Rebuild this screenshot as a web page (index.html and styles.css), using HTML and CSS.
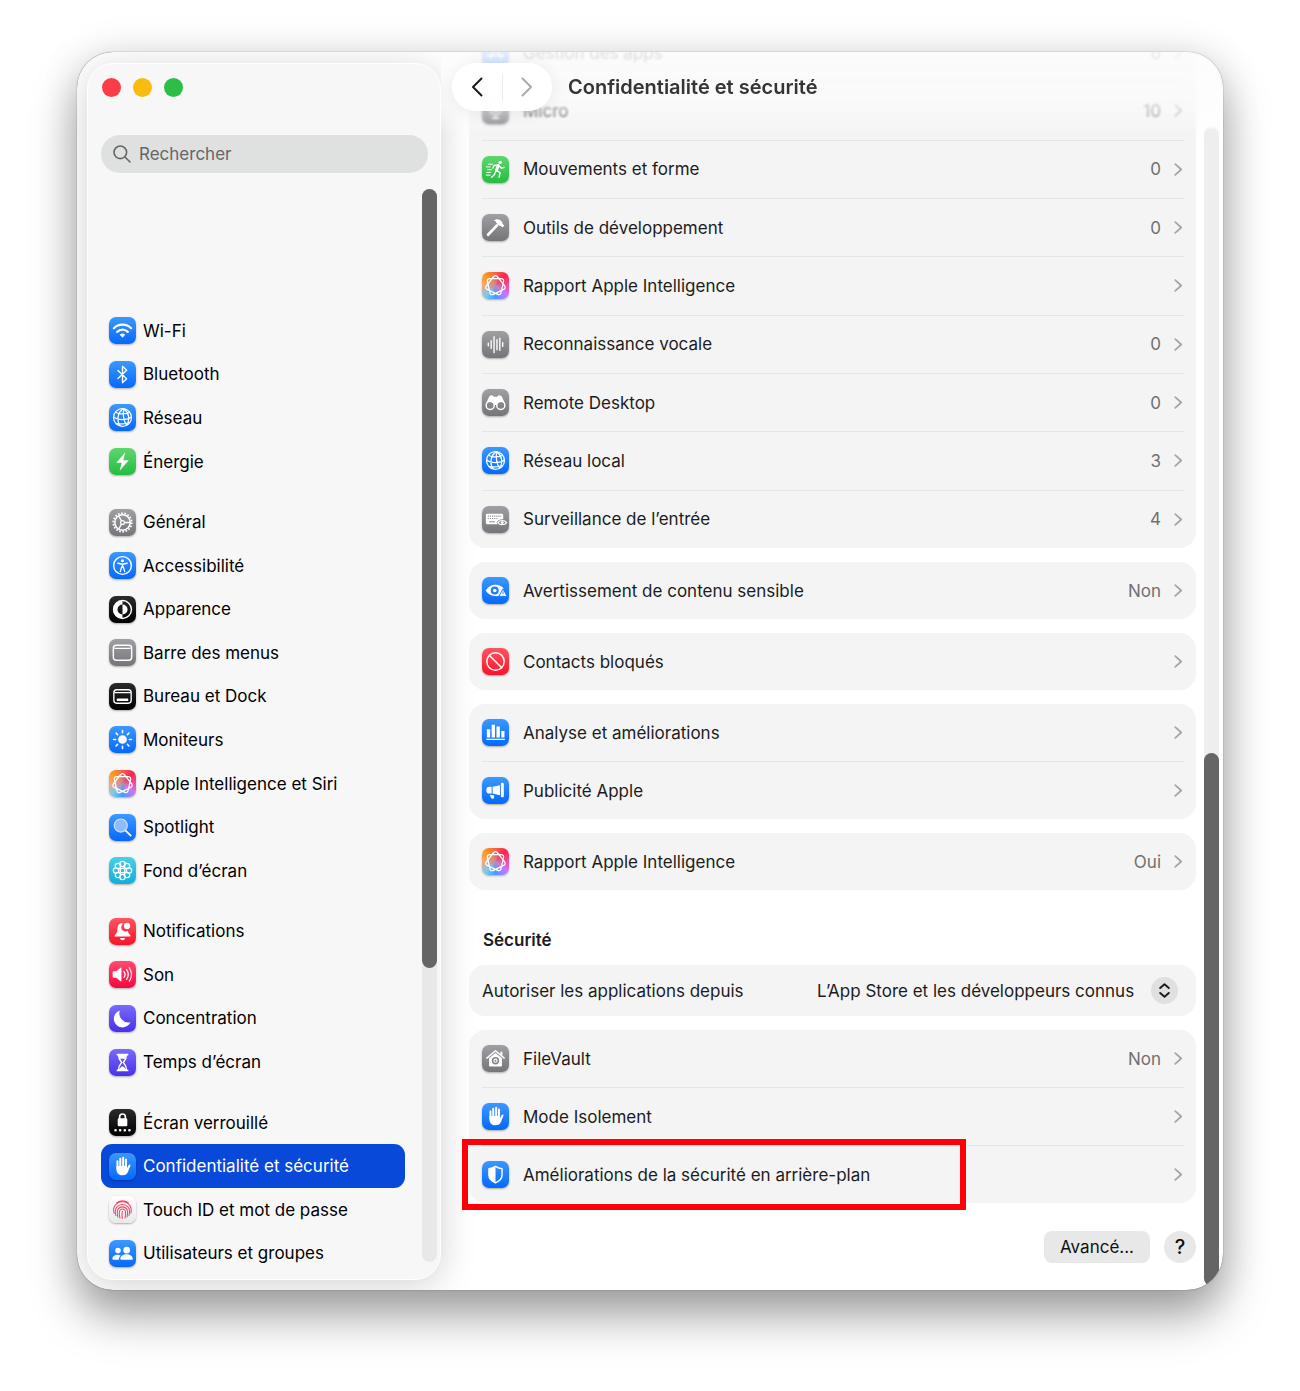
FILE: index.html
```html
<!DOCTYPE html>
<html lang="fr">
  <head>
    <meta charset="UTF-8">
    <meta name="viewport" content="width=device-width, initial-scale=1.0">
    <title>Confidentialité et sécurité</title>
    <link rel="stylesheet" href="styles.css">
  </head>
  <body>
    <!-- Icon glyphs, all on a 28 x 28 grid -->
    <svg class="glyphs" xmlns="http://www.w3.org/2000/svg">
      <symbol id="wifi" viewBox="0 0 28 28">
        <path d="M5 11.6a12.6 12.6 0 0 1 18 0M8.5 15.4a7.8 7.8 0 0 1 11 0" fill="none" stroke="currentColor" stroke-width="2.3" stroke-linecap="round" />
        <path d="M14 21.4l-2.8-3a4 4 0 0 1 5.6 0z" fill="currentColor" />
      </symbol>
      <symbol id="bluetooth" viewBox="0 0 28 28">
        <path d="M9.3 9.8l9 8.6-4.3 4.1v-17l4.3 4.1-9 8.6" fill="none" stroke="currentColor" stroke-width="1.4" stroke-linejoin="round" stroke-linecap="round" />
      </symbol>
      <symbol id="globe" viewBox="0 0 28 28">
        <g fill="none" stroke="currentColor" stroke-width="1.3">
          <circle cx="14" cy="14" r="9.3" />
          <path d="M15.5 4.8C8.500 8 7.500 18 12 23M15.500 4.800C14 10 15 18 18.500 22M15.500 4.800C21 9 21.500 16 19 21.500M6.500 8.500C11 11 18 10.500 21.500 8.500M4.800 13.500C9 17 19 17 23 13.500M7 20C11 21 18 20.800 21.500 19" />
        </g>
      </symbol>
      <symbol id="bolt" viewBox="0 0 28 28">
        <path d="M17 4.500L7.600 15.400h5.600L11 23.700l9.500-11h-5.700z" fill="currentColor" />
      </symbol>
      <symbol id="gear" viewBox="0 0 28 28">
        <g fill="none" stroke="currentColor">
          <circle cx="14" cy="14" r="8" stroke-width="1.600" />
          <circle cx="14" cy="14" r="9.600" stroke-width="1.800" stroke-dasharray="1.700 1.650" />
          <circle cx="14" cy="14" r="2" stroke-width="1.300" />
          <path d="M16 14h6M13 12.300l-3-5.200M13 15.700l-3 5.200" stroke-width="1.300" />
        </g>
      </symbol>
      <symbol id="access" viewBox="0 0 28 28">
        <circle cx="14" cy="14" r="9.200" fill="none" stroke="currentColor" stroke-width="1.500" />
        <circle cx="14" cy="9" r="1.600" fill="currentColor" />
        <path d="M9.200 11.700l4.800 1 4.800-1M14 12.500v3.500M11.700 20.300l1.500-5h1.600l1.500 5" fill="none" stroke="currentColor" stroke-width="1.400" stroke-linecap="round" stroke-linejoin="round" />
      </symbol>
      <symbol id="contrast" viewBox="0 0 28 28">
        <circle cx="14" cy="14" r="9.300" fill="none" stroke="currentColor" stroke-width="1.500" />
        <path d="M14 4.500a9.500 9.500 0 0 0 0 19v-4.300a5.200 5.200 0 0 1 0-10.400z" fill="currentColor" />
        <path d="M14 8.800a5.200 5.200 0 0 1 0 10.400z" fill="currentColor" />
      </symbol>
      <symbol id="menubar" viewBox="0 0 28 28">
        <rect x="4.500" y="6.500" width="19" height="15.500" rx="3" fill="none" stroke="currentColor" stroke-width="1.500" />
        <path d="M5.500 9.700h17" stroke="currentColor" stroke-width="1.200" />
      </symbol>
      <symbol id="dock" viewBox="0 0 28 28">
        <rect x="5" y="7" width="18" height="14" rx="3" fill="none" stroke="currentColor" stroke-width="1.400" />
        <path d="M5.500 10h17" stroke="currentColor" stroke-width="1.200" />
        <rect x="8" y="16" width="12" height="2.600" rx="0.600" fill="currentColor" />
      </symbol>
      <symbol id="sun" viewBox="0 0 28 28">
        <circle cx="14" cy="14" r="4.500" fill="currentColor" />
        <path d="M14 4.700v2.200M14 21.100v2.200M4.700 14h2.200M21.100 14h2.200M7.400 7.400L9 9M19 19l1.600 1.600M7.400 20.600L9 19M19 9l1.600-1.600" stroke="currentColor" stroke-width="1.600" stroke-linecap="round" />
      </symbol>
      <symbol id="intelligence" viewBox="-1 -1 28 28">
        <path transform="translate(-3.400 -3.300) scale(1.170)" d="M15.900 6.400L21.800 13.800Q23.700 16.200 20.900 17.600L12.500 21.600Q9.700 23 9 20L6.900 10.800Q6.200 7.800 9.300 7.800L18.700 7.800Q21.800 7.800 21.100 10.800L19 20Q18.300 23 15.500 21.600L7.100 17.600Q4.300 16.200 6.200 13.800L12.100 6.400Q14 4 15.900 6.400Z" fill="none" stroke="currentColor" stroke-width="1.100" />
      </symbol>
      <symbol id="spotlight" viewBox="0 0 28 28">
        <path d="M17.200 17.200l5.300 5.300" stroke="currentColor" stroke-width="1.800" stroke-linecap="round" />
        <circle cx="12.200" cy="12" r="6.800" fill="#8fbcff" stroke="#cfe2ff" stroke-width="1.200" />
      </symbol>
      <symbol id="flower" viewBox="0 0 28 28">
        <g fill="none" stroke="currentColor" stroke-width="1.300">
          <circle cx="14" cy="7.300" r="2.800" />
          <circle cx="18.700" cy="9.300" r="2.800" />
          <circle cx="20.700" cy="14" r="2.800" />
          <circle cx="18.700" cy="18.700" r="2.800" />
          <circle cx="14" cy="20.700" r="2.800" />
          <circle cx="9.300" cy="18.700" r="2.800" />
          <circle cx="7.300" cy="14" r="2.800" />
          <circle cx="9.300" cy="9.300" r="2.800" />
          <circle cx="14" cy="14" r="2.500" />
        </g>
      </symbol>
      <symbol id="bell" viewBox="0 0 28 28">
        <path d="M13.500 5.200c-3.400.5-4.700 3-4.700 6 0 3.600-1.200 5-2.900 6.600-.5.600-.2 1.300.7 1.300h14.800c.9 0 1.200-.7.700-1.300-1.200-1.200-2.300-2.400-2.700-4.500a4.300 4.300 0 0 1-5-7z" fill="currentColor" />
        <circle cx="18.700" cy="8.200" r="3.200" fill="currentColor" />
        <path d="M11.500 20.700h5a2.500 2.300 0 0 1-5 0z" fill="currentColor" />
      </symbol>
      <symbol id="speaker" viewBox="0 0 28 28">
        <path d="M3.800 11.700q0-1 1-1h2.800l4.300-3.800q1-.7 1 .5v13.200q0 1.200-1 .5l-4.300-3.800H4.800q-1 0-1-1z" fill="currentColor" />
        <path d="M15.500 11a5 5 0 0 1 0 6M18.200 9a8.500 8.500 0 0 1 0 10M21 7a12 12 0 0 1 0 14" fill="none" stroke="currentColor" stroke-width="1.300" stroke-linecap="round" />
      </symbol>
      <symbol id="moon" viewBox="0 0 28 28">
        <path d="M11.300 5.700a9 9 0 1 0 11 12.100A9.300 9.300 0 0 1 11.300 5.700z" fill="currentColor" />
      </symbol>
      <symbol id="hourglass" viewBox="0 0 28 28">
        <path d="M8.700 5.800h10.600M8.700 22.200h10.600" stroke="currentColor" stroke-width="1.800" stroke-linecap="round" />
        <path d="M9.800 6c0 4 .7 5 3.300 8-2.600 3-3.300 4-3.300 8h8.400c0-4-.7-5-3.300-8 2.600-3 3.300-4 3.300-8z" fill="none" stroke="currentColor" stroke-width="1.400" />
        <path d="M10.200 6h7.600c0 1.700-.4 3.200-1 4.200h-5.600c-.6-1-1-2.500-1-4.200zM10.200 22c0-1.500 2-3.500 3.800-4.200 1.800.7 3.800 2.700 3.800 4.200z" fill="currentColor" />
      </symbol>
      <symbol id="lock" viewBox="0 0 28 28">
        <rect x="9" y="9.700" width="10" height="8.300" rx="1.400" fill="currentColor" />
        <path d="M11 10.500V8.200a3 3 0 0 1 6 0v2.300" fill="none" stroke="currentColor" stroke-width="1.700" />
        <path d="M6.800 22h0M11.600 22h0M16.400 22h0M21.200 22h0" stroke="currentColor" stroke-width="2.700" stroke-linecap="round" />
      </symbol>
      <symbol id="hand" viewBox="0 0 28 28">
        <path d="M8.800 8.500v8M11.700 6v9M14.700 5v10M17.600 6.800v9" fill="none" stroke="currentColor" stroke-width="2.100" stroke-linecap="round" />
        <path d="M7.750 13.500h10.900v2.300l1.700-3.300c.8-1.300 2.300-.6 1.900.7l-2.500 6.300c-1 2.400-2.900 3.700-5.700 3.700-4.100 0-6.300-2.500-6.300-6.300z" fill="currentColor" />
      </symbol>
      <symbol id="fingerprint" viewBox="0 0 28 28">
        <g fill="none" stroke="currentColor" stroke-width="1.100" stroke-linecap="round">
          <path d="M8 7a9.500 9.500 0 0 1 12 0M5.300 18c-.9-3-.7-6 1-8.300 4-5 11.500-5 15.200 0 1.600 2.300 2 5 1.200 8" />
          <path d="M7.200 20.300c-1-3.300-.9-6.600.9-8.800 3-3.600 8.800-3.600 11.700 0 1.700 2.200 1.900 5.500.9 8.600" />
          <path d="M9.200 21.800c-.8-3.600-.9-6.600.4-8.400 2.200-2.800 6.500-2.800 8.700 0 1.300 1.900 1.200 5 .4 8.300" />
          <path d="M11.300 22.800c-.8-4-.8-6.700.1-8 1.300-1.700 3.900-1.700 5.100 0 .9 1.300.9 4.500.2 7.900M14 15.800c-.8 1.500-.6 4.500-.2 7.400" />
        </g>
      </symbol>
      <symbol id="people" viewBox="0 0 28 28">
        <g fill="currentColor">
          <circle cx="9.300" cy="11" r="2.900" />
          <circle cx="18.300" cy="10.500" r="3.400" />
          <path d="M3.500 19.800c0-3 2.300-4.600 5.500-4.600 1.300 0 2.300.2 3.200.8-1.300 1.200-2 2.700-2 4.600H4.400q-.9 0-.9-.8zM11.700 19.800c0-3.300 3-5 6.500-5s6.500 1.700 6.500 5q0 .8-1 .8h-11q-1 0-1-.8z" />
        </g>
      </symbol>
      <symbol id="runner" viewBox="0 0 28 28">
        <circle cx="18.800" cy="6.600" r="1.800" fill="currentColor" />
        <g fill="none" stroke="currentColor" stroke-linecap="round" stroke-linejoin="round">
          <path d="M16.800 9.800l-1.800 5" stroke-width="3" />
          <path d="M15.500 15l3.200 2.500-1 4.500M14.300 15.500l-1.500 4-2.800 2.500M16 9.200l-3.500.6-1.200 2.700M18 10.500l1.800 2 3-.6" stroke-width="1.500" />
          <path d="M6.500 8.500h4.500M4.500 11.300h4M6 14.200h4M5 17h4M4.500 19.800h4" stroke-width="1" />
        </g>
      </symbol>
      <symbol id="hammer" viewBox="0 0 28 28">
        <path d="M6.300 21.500l9.200-9.700" stroke="currentColor" stroke-width="2.900" stroke-linecap="round" />
        <path d="M11.800 7c2.400-2 5.200-2.300 7.600-.2l1.700 1.800.1 1.400 2 1.800-2 2.200-2-1.800-1.200.1-3.500-3.500c.2-1.300-.7-2-2.700-1.800z" fill="currentColor" />
      </symbol>
      <symbol id="waveform" viewBox="0 0 28 28">
        <path d="M6.500 12.700v2.600M9.500 10v8M12.500 6v16.500M15.500 9v10.500M18.500 7.500v12.500M21.500 12v4" stroke="currentColor" stroke-width="1.400" stroke-linecap="round" />
      </symbol>
      <symbol id="binoculars" viewBox="0 0 28 28">
        <circle cx="8.500" cy="17" r="4.200" fill="none" stroke="currentColor" stroke-width="1.500" />
        <circle cx="19.500" cy="17" r="4.200" fill="none" stroke="currentColor" stroke-width="1.500" />
        <path d="M4 15.500L7.200 8.300Q8 6.500 10 6.500q2 0 2.200 1.600h3.600q.2-1.600 2.200-1.600 2 0 2.800 1.800l3.200 7.200c-2.300-3-7.700-2.600-8.900 1h-2.200c-1.200-3.600-6.600-4-8.900-1z" fill="currentColor" />
      </symbol>
      <symbol id="keyboard" viewBox="0 0 28 28">
        <path d="M5.500 8h15q1.500 0 1.500 1.500v4.300c-3-.3-5.500 1-6.800 3.200l1.200 2H5.500Q4 19 4 17.500v-8Q4 8 5.500 8z" fill="currentColor" />
        <path d="M6 10.500h14M6 13h11" stroke="#8e8e93" stroke-width="1.100" stroke-dasharray="1.200 1" />
        <path d="M7.500 16.300h6" stroke="#8e8e93" stroke-width="1.100" />
        <path d="M16.500 17.200c2-2.900 7-2.900 9 0-2 2.900-7 2.900-9 0z" fill="none" stroke="currentColor" stroke-width="1.200" />
        <circle cx="21" cy="17.200" r="1.500" fill="currentColor" />
      </symbol>
      <symbol id="eye" viewBox="0 0 28 28">
        <path d="M3.800 14c4.300-7.600 14.700-7.700 18.700-2l-4.500 7.300c-5 1.600-11.200-.3-14.200-5.300z" fill="currentColor" />
        <circle cx="13.200" cy="14" r="4.100" fill="#1f7bfb" />
        <circle cx="13.200" cy="14" r="1.900" fill="currentColor" />
        <path d="M21.800 12.300l4.300 7.900h-8.600z" fill="currentColor" stroke="#1f7bfb" stroke-width="1" stroke-linejoin="round" />
        <path d="M21.800 15v2.500M21.800 18.500v.7" stroke="#1f7bfb" stroke-width="1" />
      </symbol>
      <symbol id="blocked" viewBox="0 0 28 28">
        <path d="M7.500 7.500l13 13" stroke="currentColor" stroke-width="1.500" />
        <circle cx="14" cy="14" r="9" fill="none" stroke="currentColor" stroke-width="1.500" />
      </symbol>
      <symbol id="bars" viewBox="0 0 28 28">
        <path d="M5 10.500h3.500v8.700H5zM10 6h3.500v13.200H10zM15 7.800h3.500v11.400H15zM20 12.500h3.300v6.700H20zM4.500 20.500h19.200v1.200H4.500z" fill="currentColor" />
      </symbol>
      <symbol id="megaphone" viewBox="0 0 28 28">
        <rect x="19.600" y="6" width="3" height="15" rx="1" fill="currentColor" />
        <path d="M18.700 8.500v10.300L11 17.200v-7zM10 10.200v7H7.500q-3 0-3-3.500t3-3.500zM8.200 18.300l4.500.8-.3 2.400q-.3 1.500-1.900 1.100-1-.3-1.300-1.300z" fill="currentColor" />
      </symbol>
      <symbol id="vault" viewBox="0 0 28 28">
        <path d="M5 13.600L14 6l9 7.600" fill="none" stroke="currentColor" stroke-width="1.500" stroke-linecap="round" stroke-linejoin="round" />
        <path d="M19 7h2.200v4.500L19 9.800z" fill="currentColor" />
        <path d="M7.300 13.800L14 8.300l6.700 5.500v7.500q0 1-1 1H8.300q-1 0-1-1z" fill="currentColor" />
        <circle cx="14" cy="16.300" r="3" fill="none" stroke="#858589" stroke-width="1.600" />
        <circle cx="14" cy="16.300" r="1" fill="#858589" />
      </symbol>
      <symbol id="shield" viewBox="0 0 28 28">
        <path d="M14 5.600c2.200 1.500 4.500 2.200 6.800 2.300v6.600c0 3.700-2.600 6.300-6.800 8.100-4.200-1.800-6.800-4.400-6.800-8.100V7.900c2.300-.1 4.600-.8 6.800-2.300z" fill="none" stroke="currentColor" stroke-width="1.500" stroke-linejoin="round" />
        <path d="M14 5.600v17c-4.200-1.800-6.800-4.400-6.800-8.100V7.900c2.300-.1 4.600-.8 6.800-2.300z" fill="currentColor" />
      </symbol>
      <symbol id="mic" viewBox="0 0 28 28">
        <rect x="11" y="4.500" width="6" height="11" rx="3" fill="currentColor" />
        <path d="M8 12.500a6 6 0 0 0 12 0M14 18.500v3.500M10.500 22h7" fill="none" stroke="currentColor" stroke-width="1.400" stroke-linecap="round" />
      </symbol>
      <symbol id="apps" viewBox="0 0 28 28">
        <path d="M15.500 6L8.500 20M12.500 6l7.500 14M5.500 17h17" stroke="currentColor" stroke-width="1.800" stroke-linecap="round" />
      </symbol>
      <symbol id="chevron" viewBox="0 0 8 12">
        <path d="M1 1l5.500 5L1 11" fill="none" stroke="currentColor" stroke-width="1.600" stroke-linecap="round" stroke-linejoin="round" />
      </symbol>
    </svg>

    <div class="window">
      <aside class="sidebar">
        <div class="lights">
          <button class="light close" aria-label="Fermer"></button>
          <button class="light minimize" aria-label="Réduire"></button>
          <button class="light zoom" aria-label="Agrandir"></button>
        </div>

        <label class="search">
          <svg viewBox="0 0 18 18" aria-hidden="true"><path d="M12 12l5 5M13.600 7.300a6.300 6.300 0 1 1-12.600 0 6.300 6.300 0 0 1 12.600 0z" fill="none" stroke="currentColor" stroke-width="1.600" stroke-linecap="round" /></svg>
          <input type="search" placeholder="Rechercher" aria-label="Rechercher">
        </label>

        <div class="sidebar-body">
          <nav>
            <a href="#"><svg class="icon blue"><use href="#wifi" /></svg>Wi-Fi</a>
            <a href="#"><svg class="icon blue"><use href="#bluetooth" /></svg>Bluetooth</a>
            <a href="#"><svg class="icon blue"><use href="#globe" /></svg>Réseau</a>
            <a href="#"><svg class="icon green"><use href="#bolt" /></svg>Énergie</a>

            <a href="#" class="first"><svg class="icon gray"><use href="#gear" /></svg>Général</a>
            <a href="#"><svg class="icon blue"><use href="#access" /></svg>Accessibilité</a>
            <a href="#"><svg class="icon black"><use href="#contrast" /></svg>Apparence</a>
            <a href="#"><svg class="icon gray"><use href="#menubar" /></svg>Barre des menus</a>
            <a href="#"><svg class="icon black"><use href="#dock" /></svg>Bureau et Dock</a>
            <a href="#"><svg class="icon blue"><use href="#sun" /></svg>Moniteurs</a>
            <a href="#"><svg class="icon rainbow"><use href="#intelligence" /></svg>Apple Intelligence et Siri</a>
            <a href="#"><svg class="icon blue"><use href="#spotlight" /></svg>Spotlight</a>
            <a href="#"><svg class="icon cyan"><use href="#flower" /></svg>Fond d’écran</a>

            <a href="#" class="first"><svg class="icon red"><use href="#bell" /></svg>Notifications</a>
            <a href="#"><svg class="icon pink"><use href="#speaker" /></svg>Son</a>
            <a href="#"><svg class="icon indigo"><use href="#moon" /></svg>Concentration</a>
            <a href="#"><svg class="icon indigo"><use href="#hourglass" /></svg>Temps d’écran</a>

            <a href="#" class="first"><svg class="icon black"><use href="#lock" /></svg>Écran verrouillé</a>
            <a href="#" class="selected" aria-current="page"><svg class="icon blue"><use href="#hand" /></svg>Confidentialité et sécurité</a>
            <a href="#"><svg class="icon white"><use href="#fingerprint" /></svg>Touch ID et mot de passe</a>
            <a href="#"><svg class="icon blue"><use href="#people" /></svg>Utilisateurs et groupes</a>
          </nav>
          <div class="scrollbar sidebar-scrollbar"><div class="thumb"></div></div>
        </div>
      </aside>

      <main>
        <header class="toolbar">
          <div class="history">
            <button aria-label="Précédent"><svg class="back" viewBox="0 0 12 20"><path d="M10.500 1.500L2 10l8.500 8.500" fill="none" stroke="currentColor" stroke-width="2" stroke-linecap="round" stroke-linejoin="round" /></svg></button>
            <button aria-label="Suivant" disabled><svg class="forward" viewBox="0 0 12 20"><path d="M1.500 1.500L10 10l-8.500 8.500" fill="none" stroke="currentColor" stroke-width="2" stroke-linecap="round" stroke-linejoin="round" /></svg></button>
          </div>
          <h1>Confidentialité et sécurité</h1>
        </header>

        <div class="content">
          <section class="card tall">
            <a href="#" class="row"><svg class="icon blue"><use href="#apps" /></svg><span class="name">Gestion des apps</span><span class="value">6</span><svg class="chevron"><use href="#chevron" /></svg></a>
            <a href="#" class="row"><svg class="icon gray"><use href="#mic" /></svg><span class="name">Micro</span><span class="value">10</span><svg class="chevron"><use href="#chevron" /></svg></a>
            <a href="#" class="row"><svg class="icon green"><use href="#runner" /></svg><span class="name">Mouvements et forme</span><span class="value">0</span><svg class="chevron"><use href="#chevron" /></svg></a>
            <a href="#" class="row"><svg class="icon gray"><use href="#hammer" /></svg><span class="name">Outils de développement</span><span class="value">0</span><svg class="chevron"><use href="#chevron" /></svg></a>
            <a href="#" class="row"><svg class="icon rainbow"><use href="#intelligence" /></svg><span class="name">Rapport Apple Intelligence</span><svg class="chevron"><use href="#chevron" /></svg></a>
            <a href="#" class="row"><svg class="icon gray"><use href="#waveform" /></svg><span class="name">Reconnaissance vocale</span><span class="value">0</span><svg class="chevron"><use href="#chevron" /></svg></a>
            <a href="#" class="row"><svg class="icon gray"><use href="#binoculars" /></svg><span class="name">Remote Desktop</span><span class="value">0</span><svg class="chevron"><use href="#chevron" /></svg></a>
            <a href="#" class="row"><svg class="icon blue"><use href="#globe" /></svg><span class="name">Réseau local</span><span class="value">3</span><svg class="chevron"><use href="#chevron" /></svg></a>
            <a href="#" class="row"><svg class="icon gray"><use href="#keyboard" /></svg><span class="name">Surveillance de l’entrée</span><span class="value">4</span><svg class="chevron"><use href="#chevron" /></svg></a>
          </section>

          <section class="card">
            <a href="#" class="row"><svg class="icon blue"><use href="#eye" /></svg><span class="name">Avertissement de contenu sensible</span><span class="value">Non</span><svg class="chevron"><use href="#chevron" /></svg></a>
          </section>

          <section class="card">
            <a href="#" class="row"><svg class="icon red"><use href="#blocked" /></svg><span class="name">Contacts bloqués</span><svg class="chevron"><use href="#chevron" /></svg></a>
          </section>

          <section class="card">
            <a href="#" class="row"><svg class="icon blue"><use href="#bars" /></svg><span class="name">Analyse et améliorations</span><svg class="chevron"><use href="#chevron" /></svg></a>
            <a href="#" class="row"><svg class="icon blue"><use href="#megaphone" /></svg><span class="name">Publicité Apple</span><svg class="chevron"><use href="#chevron" /></svg></a>
          </section>

          <section class="card">
            <a href="#" class="row"><svg class="icon rainbow"><use href="#intelligence" /></svg><span class="name">Rapport Apple Intelligence</span><span class="value">Oui</span><svg class="chevron"><use href="#chevron" /></svg></a>
          </section>

          <h2>Sécurité</h2>

          <section class="card">
            <div class="row select-row">
              <label for="sources" class="name">Autoriser les applications depuis</label>
              <div class="select">
                <select id="sources">
                  <option>L’App Store et les développeurs connus</option>
                  <option>L’App Store</option>
                </select>
                <svg viewBox="0 0 28 28" aria-hidden="true"><path d="M9.500 11.500L14 7.500l4.500 4M9.500 16.500l4.500 4 4.500-4" fill="none" stroke="currentColor" stroke-width="2" stroke-linecap="round" stroke-linejoin="round" /></svg>
              </div>
            </div>
          </section>

          <section class="card">
            <a href="#" class="row"><svg class="icon gray"><use href="#vault" /></svg><span class="name">FileVault</span><span class="value">Non</span><svg class="chevron"><use href="#chevron" /></svg></a>
            <a href="#" class="row"><svg class="icon blue"><use href="#hand" /></svg><span class="name">Mode Isolement</span><svg class="chevron"><use href="#chevron" /></svg></a>
            <a href="#" class="row highlighted"><svg class="icon blue"><use href="#shield" /></svg><span class="name">Améliorations de la sécurité en arrière-plan</span><svg class="chevron"><use href="#chevron" /></svg></a>
          </section>

          <div class="actions">
            <button class="advanced">Avancé...</button>
            <button class="help" aria-label="Aide">?</button>
          </div>
        </div>
        <div class="scrollbar main-scrollbar"><div class="thumb"></div></div>
      </main>
    </div>
  </body>
</html>
```

FILE: styles.css
```css
*,
*::before,
*::after {
  box-sizing: border-box;
}

body {
  margin: 0;
  padding: 52px 77px 101px;
  background: #fff;
  color: #1c1c1c;
  font: 17px/24px Inter, "Liberation Sans", sans-serif;
}

a {
  color: inherit;
  text-decoration: none;
}

button,
input,
select {
  margin: 0;
  padding: 0;
  border: none;
  background: none;
  color: inherit;
  font: inherit;
}

.glyphs {
  display: none;
}

.window {
  display: flex;
  height: calc(100vh - 153px);
  min-height: 1238px;
  overflow: hidden;
  border-radius: 36px;
  background: #fff;
  box-shadow:
    0 0 1px rgba(0, 0, 0, 0.7),
    0 0 40px rgba(0, 0, 0, 0.1),
    0 26px 46px rgba(0, 0, 0, 0.36);
}

/* Sidebar */
.sidebar {
  display: flex;
  flex-direction: column;
  flex: none;
  width: 354px;
  margin: 11px 0 10px 10px;
  border: 1px solid #fff;
  border-radius: 26px;
  background: #f7f7f8;
  box-shadow: 0 6px 36px rgba(0, 0, 0, 0.18);
  color: #000;
}

.lights {
  display: flex;
  gap: 12px;
  padding: 14px 14px 0;
}

.light {
  width: 19px;
  height: 19px;
  border-radius: 50%;
}
.close {
  background: #fc3c48;
}
.minimize {
  background: #f9bb0d;
}
.zoom {
  background: #2cbf45;
}

.search {
  display: flex;
  align-items: center;
  gap: 8px;
  height: 38px;
  margin: 38px 12px 0 13px;
  padding: 0 12px;
  border-radius: 19px;
  background: #dfe0e0;
  color: #666;
}
.search svg {
  flex: none;
  width: 18px;
  height: 18px;
}
.search input {
  flex: 1;
  min-width: 0;
  outline: none;
  appearance: none;
}
.search input::placeholder {
  color: #666;
  opacity: 1;
}

.sidebar-body {
  display: flex;
  flex: 1;
  gap: 17px;
  padding: 16px 3px 4px 13px;
}

nav {
  display: flex;
  flex: 1;
  flex-direction: column;
  padding-top: 120px;
}
nav a {
  display: flex;
  flex: 1;
  align-items: center;
  gap: 7px;
  padding: 0 8px;
  border-radius: 11px;
}
nav .first {
  margin-top: 17px;
}
nav .selected {
  background: #0849da;
  color: #fff;
}

.scrollbar {
  flex: none;
  width: 15px;
  border-radius: 8px;
}
.scrollbar .thumb {
  border-radius: 8px;
  background: #656565;
}

.sidebar-scrollbar {
  margin-bottom: 13px;
  background: #e8e8e8;
}
.sidebar-scrollbar .thumb {
  height: 72.6%;
}

/* Icon tiles */
.icon {
  flex: none;
  width: 27px;
  height: 27px;
  border-radius: 7px;
  box-shadow: 0 1px 2px rgba(0, 0, 0, 0.3);
  color: #fff;
}
.blue {
  background: linear-gradient(#3c98ff, #0569fb);
}
.green {
  background: linear-gradient(#5fd66e, #25bd40);
}
.gray {
  background: linear-gradient(#a0a0a4, #747479);
}
.black {
  background: linear-gradient(#2b2b2b, #000);
}
.cyan {
  background: linear-gradient(#4bcfe8, #11aed8);
}
.red {
  background: linear-gradient(#ff5560, #f7132b);
}
.pink {
  background: linear-gradient(#ff4c71, #f8063f);
}
.indigo {
  background: linear-gradient(#786bfa, #4a30ec);
}
.white {
  background: linear-gradient(#fff, #e9e9e9);
  color: #ee4a6b;
}
.rainbow {
  background:
    radial-gradient(circle at 45% 50%, rgba(190, 140, 170, 0.9), transparent 45%),
    conic-gradient(from 0deg, #f5634e, #f8254f 45deg, #f0509c 90deg, #c877f7 130deg, #3fa0fb 180deg, #7ccbe8 225deg, #f0a98d 265deg, #fa9a1b 315deg, #f5634e);
}

/* Settings pane */
main {
  position: relative;
  display: flex;
  flex: 1;
  min-width: 0;
}

.toolbar {
  position: absolute;
  z-index: 1;
  top: 0;
  right: 0;
  left: 0;
  display: flex;
  align-items: center;
  gap: 16px;
  height: 70px;
  padding-left: 11px;
}
.toolbar::before {
  content: "";
  position: absolute;
  z-index: -1;
  inset: 0 0 -18px;
  background: linear-gradient(rgba(252, 252, 252, 0.88), rgba(252, 252, 252, 0.65) 60%, rgba(252, 252, 252, 0));
  backdrop-filter: blur(1px);
  mask-image: linear-gradient(#000 85%, transparent);
}

.history {
  display: flex;
  align-items: center;
  width: 100px;
  height: 48px;
  border-radius: 24px;
  background: rgba(255, 255, 255, 0.97);
  box-shadow: 0 2px 16px rgba(0, 0, 0, 0.08);
}
.history button {
  display: flex;
  flex: 1;
  align-items: center;
  justify-content: center;
  height: 28px;
}
.history button + button {
  border-left: 1px solid #ebebeb;
}
.history svg {
  width: 12px;
  height: 20px;
}
.history .forward {
  color: #ababab;
}

h1 {
  margin: 0;
  color: #353535;
  font-size: 20px;
  font-weight: 600;
}

/* The list is scrolled: its first row runs under the top edge */
.content {
  display: flex;
  flex: 1;
  flex-direction: column;
  gap: 14px;
  min-width: 0;
  margin-top: -28px;
  padding: 0 0 27px 28px;
}

.card {
  padding: 0 12px 0 13px;
  border-radius: 16px;
  background: #f4f4f4;
}
.tall {
  display: flex;
  flex: 1;
  flex-direction: column;
}
.tall .row {
  flex: 1;
}

.row {
  position: relative;
  display: flex;
  align-items: center;
  min-height: 57px;
}
.row + .row {
  border-top: 1px solid #e5e5e5;
  min-height: 58px;
}
.row .icon {
  margin-right: 14px;
}
.name {
  flex: 1;
}
.value {
  margin-right: 13px;
  color: #707070;
}
.chevron {
  width: 9px;
  height: 13px;
  margin-right: 1px;
  color: #a4a4a4;
}

/* Red frame around the row to look at */
.highlighted::after {
  content: "";
  position: absolute;
  top: -7px;
  bottom: -7px;
  left: -20px;
  width: 504px;
  border: 6px solid #ff0009;
}

h2 {
  margin: 0;
  padding: 25px 14px 0;
  font-size: 17px;
  font-weight: 600;
  line-height: 22px;
}

.row.select-row {
  min-height: 51px;
}
.select {
  position: relative;
}
.select select {
  height: 27px;
  padding-right: 49px;
  appearance: none;
}
.select svg {
  position: absolute;
  top: 0;
  right: 6px;
  width: 27px;
  height: 27px;
  border-radius: 50%;
  background: #e0e0e0;
  pointer-events: none;
}

.actions {
  display: flex;
  justify-content: flex-end;
  gap: 14px;
  padding-top: 14px;
}
.actions button {
  height: 32px;
  background: #e8e8e8;
  color: #111;
}
.advanced {
  padding: 0 16px;
  border-radius: 8px;
}
.actions .help {
  width: 32px;
  border-radius: 50%;
  font-size: 20px;
  font-weight: 500;
}

.main-scrollbar {
  display: flex;
  flex-direction: column;
  justify-content: flex-end;
  margin: 75px 4px 4px 8px;
  background: #eee;
}
.main-scrollbar .thumb {
  height: 46%;
}
```
